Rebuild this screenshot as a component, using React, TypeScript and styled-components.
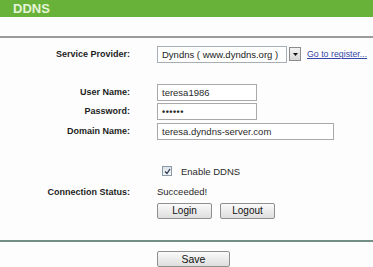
import React from 'react';
import styled, { createGlobalStyle } from 'styled-components';

const GlobalStyle = createGlobalStyle`
  body {
    margin: 0;
    background: #fdfdfd;
    font-family: "Liberation Sans", Arial, sans-serif;
    color: #222;
  }
`;

const Page = styled.div`
  width: 373px;
  height: 267px;
  overflow: hidden;
  display: flex;
  flex-direction: column;
`;

const Header = styled.div`
  height: 17px;
  background: #68b23a;
  color: #e6f4d8;
  font-weight: bold;
  font-size: 13px;
  line-height: 17px;
  padding-left: 13px;
`;

const Rule = styled.div<{ $top: number; $color: string }>`
  margin-top: ${(p) => p.$top}px;
  height: 2px;
  background: ${(p) => p.$color};
`;

const Row = styled.div<{ $top: number; $h: number }>`
  margin-top: ${(p) => p.$top}px;
  height: ${(p) => p.$h}px;
  display: grid;
  grid-template-columns: 130px 1fr;
  column-gap: 27px;
  align-items: center;
`;

const Label = styled.div`
  text-align: right;
  font-weight: bold;
  font-size: 9px;
  color: #1e1e1e;
`;

const Value = styled.div`
  display: flex;
  align-items: center;
  gap: 8px;
  font-size: 9.5px;
  color: #2a2a2a;
`;

const Select = styled.div`
  display: flex;
  align-items: center;
  gap: 2px;
`;

const SelectBox = styled.div`
  width: 124px;
  height: 15px;
  border: 1px solid #a8aeb6;
  background: #fff;
  font-size: 9.5px;
  line-height: 15px;
  padding-left: 4px;
  color: #222;
`;

const ArrowBox = styled.div`
  width: 10px;
  height: 12px;
  border: 1px solid #8c8c8c;
  background: linear-gradient(#f2f2f2, #d6d6d6);
  display: flex;
  align-items: center;
  justify-content: center;
`;

const Link = styled.a`
  color: #3646a8;
  text-decoration: underline;
  font-size: 8.8px;
  white-space: nowrap;
  margin-left: -2px;
`;

const Input = styled.div<{ $w: number }>`
  width: ${(p) => p.$w}px;
  height: 15px;
  border: 1px solid #a9a9a9;
  background: #fff;
  font-size: 9.5px;
  line-height: 15px;
  padding-left: 4px;
  box-sizing: content-box;
  color: #2a2a2a;
`;

const Dots = styled.span`
  font-size: 9px;
  letter-spacing: 0.5px;
  font-weight: bold;
`;

const CheckRow = styled.div`
  display: flex;
  align-items: center;
  gap: 9px;
  padding-left: 5px;
  font-size: 9.5px;
  color: #2a2a2a;
`;

const CheckBox = styled.span`
  width: 8px;
  height: 8px;
  border: 1px solid #8b99a6;
  background: linear-gradient(#dde3ea, #f4f6f8);
  display: flex;
  align-items: center;
  justify-content: center;
`;

const Button = styled.button<{ $w: number; $size?: number }>`
  width: ${(p) => p.$w}px;
  height: 16px;
  padding: 0;
  border: 1px solid #8f8f8f;
  border-radius: 2px;
  background: linear-gradient(#fafafa, #dedede);
  font-family: "Liberation Sans", Arial, sans-serif;
  font-size: ${(p) => p.$size ?? 10}px;
  color: #111;
  line-height: 14px;
`;

const SaveWrap = styled.div`
  margin-top: 7px;
  padding-left: 157px;
`;

export default function App() {
  return (
    <Page>
      <GlobalStyle />
      <Header>DDNS</Header>
      <Rule $top={19} $color="#9a9a9a" />
      <Row $top={8} $h={17}>
        <Label>Service Provider:</Label>
        <Value>
          <Select>
            <SelectBox>Dyndns ( www.dyndns.org )</SelectBox>
            <ArrowBox>
              <svg width="5" height="3" viewBox="0 0 5 3">
                <path d="M0 0 H5 L2.5 3 Z" fill="#111" />
              </svg>
            </ArrowBox>
          </Select>
          <Link href="#">Go to register...</Link>
        </Value>
      </Row>
      <Row $top={21} $h={17}>
        <Label>User Name:</Label>
        <Value>
          <Input $w={94}>teresa1986</Input>
        </Value>
      </Row>
      <Row $top={2} $h={17}>
        <Label>Password:</Label>
        <Value>
          <Input $w={94}>
            <Dots>••••••</Dots>
          </Input>
        </Value>
      </Row>
      <Row $top={3} $h={17}>
        <Label>Domain Name:</Label>
        <Value>
          <Input $w={171}>teresa.dyndns-server.com</Input>
        </Value>
      </Row>
      <Row $top={25} $h={14}>
        <span />
        <CheckRow>
          <CheckBox>
            <svg width="7" height="7" viewBox="0 0 7 7">
              <path d="M1 3.5 L3 5.5 L6 1" stroke="#2b3a55" strokeWidth="1.3" fill="none" />
            </svg>
          </CheckBox>
          Enable DDNS
        </CheckRow>
      </Row>
      <Row $top={8} $h={14}>
        <Label>Connection Status:</Label>
        <Value>Succeeded!</Value>
      </Row>
      <Row $top={5} $h={16}>
        <span />
        <Value>
          <Button $w={55}>Login</Button>
          <Button $w={55}>Logout</Button>
        </Value>
      </Row>
      <Rule $top={21} $color="#738f86" />
      <SaveWrap>
        <Button $w={73} $size={10.5}>Save</Button>
      </SaveWrap>
    </Page>
  );
}
